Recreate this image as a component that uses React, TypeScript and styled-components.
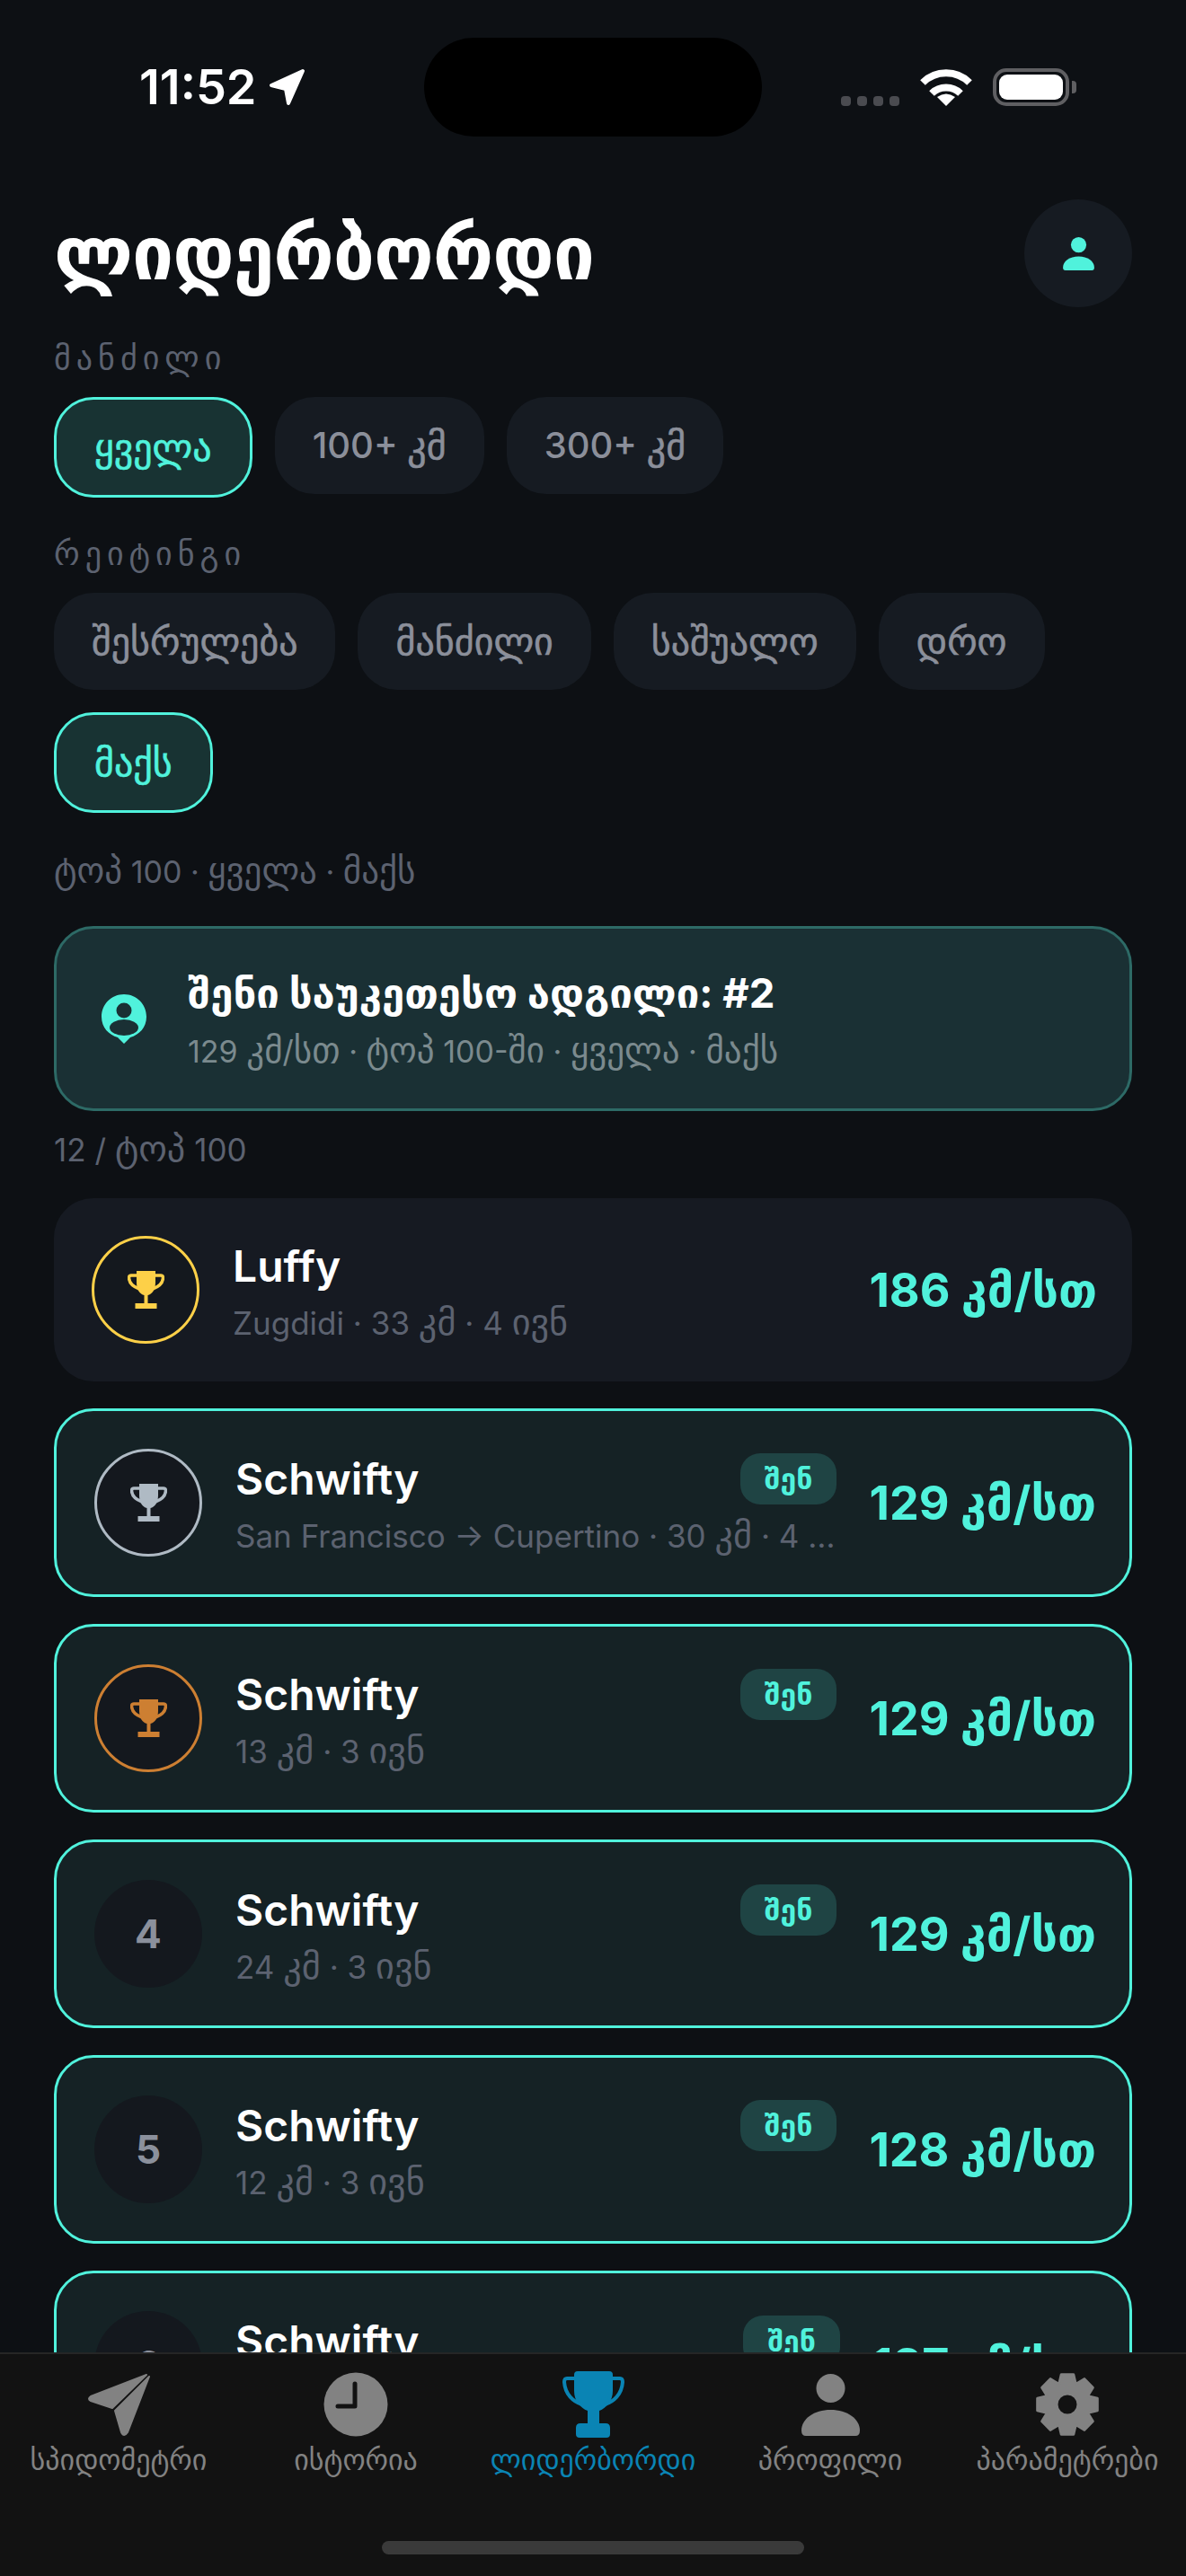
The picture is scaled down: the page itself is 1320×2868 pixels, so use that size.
import React from "react";
import styled, { createGlobalStyle } from "styled-components";

const teal = "#50f2dc";
const fontStack = `Inter, "DejaVu Sans", "Noto Sans", sans-serif`;

const GlobalStyle = createGlobalStyle`
  html, body {
    margin: 0;
    padding: 0;
    background: #0d1014;
  }
  * {
    box-sizing: border-box;
  }
`;

type RowData = {
  rank: number;
  name: string;
  sub: string;
  speed: string;
  mine: boolean;
  medal?: string;
};

const rows: RowData[] = [
  { rank: 1, name: "Luffy", sub: "Zugdidi · 33 კმ · 4 ივნ", speed: "186 კმ/სთ", mine: false, medal: "#fdd048" },
  { rank: 2, name: "Schwifty", sub: "San Francisco → Cupertino · 30 კმ · 4 ივნ", speed: "129 კმ/სთ", mine: true, medal: "#afbac4" },
  { rank: 3, name: "Schwifty", sub: "13 კმ · 3 ივნ", speed: "129 კმ/სთ", mine: true, medal: "#cd7f32" },
  { rank: 4, name: "Schwifty", sub: "24 კმ · 3 ივნ", speed: "129 კმ/სთ", mine: true },
  { rank: 5, name: "Schwifty", sub: "12 კმ · 3 ივნ", speed: "128 კმ/სთ", mine: true },
  { rank: 6, name: "Schwifty", sub: "17 კმ · 3 ივნ", speed: "127 კმ/სთ", mine: true },
];

// the Georgian fallback runs small next to Inter, so those runs get their own size
const Mixed = ({ text }: { text: string }) => (
  <>
    {text.split(/([\u10A0-\u10FF]+)/).map((part, i) =>
      i % 2 === 1 ? <Geo key={i}>{part}</Geo> : part
    )}
  </>
);

const gearPath = () => {
  const teeth = 8;
  const outer = 34;
  const root = 25.5;
  let d = "";
  for (let i = 0; i < teeth; i++) {
    const c = (i * 2 * Math.PI) / teeth - Math.PI / 2;
    const pts = [
      [root, c - 0.36],
      [outer, c - 0.2],
      [outer, c + 0.2],
      [root, c + 0.36],
    ];
    pts.forEach(([r, a], j) => {
      const x = (36 + r * Math.cos(a)).toFixed(2);
      const y = (36 + r * Math.sin(a)).toFixed(2);
      d += `${i === 0 && j === 0 ? "M" : "L"}${x} ${y} `;
    });
  }
  return d + "Z M36 24 A12 12 0 1 0 36 48 A12 12 0 1 0 36 24 Z";
};

const PlaneIcon = ({ color }: { color: string }) => (
  <svg width="71" height="72" viewBox="0 0 71 72" fill={color} stroke={color} strokeWidth="2" strokeLinejoin="round">
    <path d="M66 3 L4 27 Q0 30 4 32 L28 40 Z" />
    <path d="M69 5 L31 43 L38 67 Q41 73 45 67 Z" />
  </svg>
);

const ClockIcon = ({ color }: { color: string }) => (
  <svg width="72" height="72" viewBox="0 0 72 72">
    <circle cx="36" cy="36" r="35.5" fill={color} />
    <path d="M35 13 V38 H16" fill="none" stroke="#121212" strokeWidth="5" strokeLinecap="round" strokeLinejoin="round" />
  </svg>
);

const CupIcon = ({ color }: { color: string }) => (
  <svg width="69" height="74" viewBox="0 0 69 74" fill={color}>
    <path d="M17 0 H52 Q56 0 56 4 V22 C56 33 49 41 41 44 V58 H48 Q53 58 53 63 V70 Q53 74 49 74 H19 Q15 74 15 70 V63 Q15 58 20 58 H28 V44 C20 41 13 33 13 22 V4 Q13 0 17 0 Z" />
    <path d="M14 8 H5 Q2 8 2 12 C3 26 12 34 22 37" fill="none" stroke={color} strokeWidth="4" />
    <path d="M55 8 H64 Q67 8 67 12 C66 26 57 34 47 37" fill="none" stroke={color} strokeWidth="4" />
  </svg>
);

const PersonIcon = ({ color, width, height }: { color: string; width: number; height: number }) => (
  <svg width={width} height={height} viewBox="0 0 65 69" fill={color}>
    <circle cx="32.5" cy="16" r="16" />
    <path d="M0 63 C0 50 14 40 32.5 40 C51 40 65 50 65 63 Q65 69 60 69 H5 Q0 69 0 63 Z" />
  </svg>
);

const GearIcon = ({ color }: { color: string }) => (
  <svg width="72" height="72" viewBox="0 0 72 72">
    <path d={gearPath()} fill={color} fillRule="evenodd" stroke={color} strokeWidth="3" strokeLinejoin="round" />
  </svg>
);

const MedalCup = ({ color }: { color: string }) => (
  <svg width="41" height="42" viewBox="0 0 41 42" fill={color}>
    <path d="M10 0 H31 V13 C31 21 27 26 22.5 27 V36 H18.5 V27 C14 26 10 21 10 13 Z" />
    <rect x="8.5" y="36" width="24" height="6" />
    <path d="M11 5 H4 Q1.5 5 1.5 8 C2 14 7 18 13 20" fill="none" stroke={color} strokeWidth="3.5" />
    <path d="M30 5 H37 Q39.5 5 39.5 8 C39 14 34 18 28 20" fill="none" stroke={color} strokeWidth="3.5" />
  </svg>
);

const tabs = [
  { label: "სპიდომეტრი", icon: (c: string) => <PlaneIcon color={c} /> },
  { label: "ისტორია", icon: (c: string) => <ClockIcon color={c} /> },
  { label: "ლიდერბორდი", icon: (c: string) => <CupIcon color={c} />, active: true },
  { label: "პროფილი", icon: (c: string) => <PersonIcon color={c} width={65} height={69} /> },
  { label: "პარამეტრები", icon: (c: string) => <GearIcon color={c} /> },
];

const App = () => {
  return (
    <Screen>
      <GlobalStyle />
      <StatusBar>
        <StatusLeft>
          <Clock>11:52</Clock>
          <svg width="41" height="42" viewBox="0 0 41 42" fill="#fff" stroke="#fff" strokeWidth="4" strokeLinejoin="round">
            <path d="M38 3 L3 19 L19 23 L22 39 Z" />
          </svg>
        </StatusLeft>
        <Island />
        <StatusRight>
          <SignalDots>
            <SignalDot />
            <SignalDot />
            <SignalDot />
            <SignalDot />
          </SignalDots>
          <svg width="58" height="41" viewBox="0 0 58 41" fill="none" stroke="#fff" strokeWidth="8">
            <path d="M3 15 A37 37 0 0 1 55 15" />
            <path d="M13 27 A23 23 0 0 1 45 27" />
            <path d="M29 41 L19 31 Q29 24 39 31 Z" fill="#fff" stroke="none" />
          </svg>
          <Battery>
            <BatteryFill />
          </Battery>
        </StatusRight>
      </StatusBar>

      <Content>
        <Header>
          <Title>ლიდერბორდი</Title>
          <ProfileButton>
            <PersonIcon color={teal} width={35} height={37} />
          </ProfileButton>
        </Header>

        <SectionLabel>მანძილი</SectionLabel>
        <ChipRow>
          <Chip $active><Mixed text="ყველა" /></Chip>
          <Chip><Mixed text="100+ კმ" /></Chip>
          <Chip><Mixed text="300+ კმ" /></Chip>
        </ChipRow>

        <SectionLabel>რეიტინგი</SectionLabel>
        <ChipRow>
          <Chip><Mixed text="შესრულება" /></Chip>
          <Chip><Mixed text="მანძილი" /></Chip>
          <Chip><Mixed text="საშუალო" /></Chip>
          <Chip><Mixed text="დრო" /></Chip>
          <Chip $active><Mixed text="მაქს" /></Chip>
        </ChipRow>

        <Summary><Mixed text="ტოპ 100 · ყველა · მაქს" /></Summary>

        <BestCard>
          <svg width="50" height="55" viewBox="0 0 50 55">
            <path
              d="M25 0 C39 0 50 11 50 25 C50 37 42 45 32 48 L25 55 L18 48 C8 45 0 37 0 25 C0 11 11 0 25 0 Z"
              fill={teal}
            />
            <circle cx="25" cy="18" r="8.5" fill="#1a3034" />
            <ellipse cx="25" cy="37" rx="16" ry="9" fill="#1a3034" />
          </svg>
          <BestText>
            <BestTitle>შენი საუკეთესო ადგილი: #2</BestTitle>
            <BestSub><Mixed text="129 კმ/სთ · ტოპ 100-ში · ყველა · მაქს" /></BestSub>
          </BestText>
        </BestCard>

        <CountLabel><Mixed text="12 / ტოპ 100" /></CountLabel>

        <List>
          {rows.map((row) => (
            <Row key={row.rank} $mine={row.mine}>
              <RankBadge $color={row.medal}>
                {row.medal ? <MedalCup color={row.medal} /> : row.rank}
              </RankBadge>
              <RowText>
                <NameLine>
                  <Name>{row.name}</Name>
                  {row.mine && <YouTag>შენ</YouTag>}
                </NameLine>
                <RowSub><Mixed text={row.sub} /></RowSub>
              </RowText>
              <Speed>{row.speed}</Speed>
            </Row>
          ))}
        </List>
      </Content>

      <TabBar>
        <Tabs>
          {tabs.map((tab) => (
            <Tab key={tab.label}>
              <TabIcon>{tab.icon(tab.active ? "#0a84b4" : "#828282")}</TabIcon>
              <TabLabel $active={tab.active}>{tab.label}</TabLabel>
            </Tab>
          ))}
        </Tabs>
        <HomeIndicator />
      </TabBar>
    </Screen>
  );
};

const Screen = styled.div`
  display: flex;
  flex-direction: column;
  width: 1320px;
  height: 2868px;
  overflow: hidden;
  background: #0d1014;
  font-family: ${fontStack};
  color: #fff;
`;
const Geo = styled.span`
  font-size: 1.15em;
`;

const StatusBar = styled.div`
  flex: none;
  display: grid;
  grid-template-columns: 1fr 376px 1fr;
  align-items: center;
  height: 190px;
  padding-top: 42px;
  padding-bottom: 38px;
`;
const StatusLeft = styled.div`
  display: flex;
  align-items: center;
  gap: 13px;
  padding-left: 155px;
`;
const Clock = styled.span`
  font-size: 54px;
  font-weight: 600;
  line-height: 60px;
`;
const Island = styled.div`
  height: 110px;
  background: #000;
  border-radius: 55px;
`;
const StatusRight = styled.div`
  display: flex;
  align-items: center;
  justify-content: flex-end;
  gap: 23px;
  padding-right: 130px;
`;
const SignalDots = styled.div`
  display: flex;
  gap: 7px;
  padding-top: 31px;
`;
const SignalDot = styled.div`
  width: 11px;
  height: 11px;
  border-radius: 4px;
  background: #4a4b50;
`;
const Battery = styled.div`
  position: relative;
  width: 85px;
  height: 42px;
  padding: 3px;
  border: 4px solid #5f5f62;
  border-radius: 15px;

  &::after {
    content: "";
    position: absolute;
    right: -12px;
    top: 10px;
    width: 5px;
    height: 14px;
    background: #5f5f62;
    border-radius: 0 4px 4px 0;
  }
`;
const BatteryFill = styled.div`
  height: 100%;
  background: #fff;
  border-radius: 9px;
`;

const Content = styled.div`
  flex: 1;
  min-height: 0;
  overflow: hidden;
  padding: 32px 60px 0;
`;
const Header = styled.div`
  display: flex;
  align-items: center;
  justify-content: space-between;
  height: 120px;
  margin-bottom: 36px;
`;
const Title = styled.h1`
  margin: 0;
  font-size: 82px;
  font-weight: 700;
  line-height: 90px;
  letter-spacing: -1px;
`;
const ProfileButton = styled.div`
  display: flex;
  align-items: center;
  justify-content: center;
  width: 120px;
  height: 120px;
  border-radius: 50%;
  background: #161b22;
`;

const SectionLabel = styled.div`
  height: 40px;
  margin-bottom: 24px;
  font-size: 36px;
  line-height: 40px;
  letter-spacing: 6px;
  color: #5c6270;
`;
const ChipRow = styled.div`
  display: flex;
  flex-wrap: wrap;
  gap: 25px;
  margin-bottom: 42px;
`;
const Chip = styled.div<{ $active?: boolean }>`
  display: flex;
  align-items: center;
  height: ${(p) => (p.$active ? "112px" : "108px")};
  padding: 0 42px;
  border: ${(p) => (p.$active ? `3px solid ${teal}` : "none")};
  border-radius: 44px;
  background: ${(p) => (p.$active ? "#183333" : "#161b22")};
  color: ${(p) => (p.$active ? teal : "#8b8f9a")};
  font-size: 40px;
  font-weight: 500;
  line-height: 48px;
  white-space: pre;

  span {
    font-size: 42px;
    -webkit-text-stroke: 0.6px currentColor;
  }
`;

const Summary = styled.div`
  height: 44px;
  margin-bottom: 40px;
  font-size: 34px;
  line-height: 44px;
  color: #5c6270;
`;
const BestCard = styled.div`
  display: flex;
  align-items: center;
  gap: 46px;
  padding: 42px 50px;
  border: 3px solid #2d6a66;
  border-radius: 44px;
  background: #1a3034;
`;
const BestText = styled.div`
  display: flex;
  flex-direction: column;
  gap: 10px;
`;
const BestTitle = styled.div`
  font-size: 45.5px;
  font-weight: 700;
  line-height: 60px;
`;
const BestSub = styled.div`
  height: 46px;
  font-size: 34px;
  line-height: 46px;
  color: #7b8a8e;
`;
const CountLabel = styled.div`
  height: 44px;
  margin: 20px 0 33px;
  font-size: 35px;
  line-height: 44px;
  color: #5c6270;
`;

const List = styled.div`
  display: flex;
  flex-direction: column;
  gap: 30px;
`;
const Row = styled.div<{ $mine: boolean }>`
  display: flex;
  align-items: center;
  padding: ${(p) => (p.$mine ? "42px 37px 42px 42px" : "42px 39px 42px 42px")};
  border: ${(p) => (p.$mine ? `3px solid ${teal}` : "none")};
  border-radius: 44px;
  background: ${(p) => (p.$mine ? "#152225" : "#161a22")};
`;
const RankBadge = styled.div<{ $color?: string }>`
  flex: none;
  display: flex;
  align-items: center;
  justify-content: center;
  width: 120px;
  height: 120px;
  border: ${(p) => (p.$color ? `3.5px solid ${p.$color}` : "none")};
  border-radius: 50%;
  background: #14181e;
  color: #8b909c;
  font-size: 44px;
  font-weight: 700;
`;
const RowText = styled.div`
  flex: 1;
  min-width: 0;
  margin: 0 36px 0 37px;
`;
const NameLine = styled.div`
  display: flex;
  align-items: center;
  justify-content: space-between;
  height: 60px;
`;
const Name = styled.div`
  font-size: 48px;
  font-weight: 600;
  line-height: 60px;
`;
const YouTag = styled.div`
  padding: 6px 27px;
  border-radius: 22px;
  background: #1f4444;
  color: ${teal};
  font-size: 32px;
  font-weight: 600;
  line-height: 45px;
`;
const RowSub = styled.div`
  height: 56px;
  margin: 4px 0 -7px;
  overflow: hidden;
  font-size: 35px;
  line-height: 56px;
  color: #5c6270;
  white-space: nowrap;
  text-overflow: ellipsis;
`;
const Speed = styled.div`
  flex: none;
  color: ${teal};
  font-size: 52px;
  font-weight: 700;
`;

const TabBar = styled.div`
  flex: none;
  height: 249px;
  padding-top: 19px;
  border-top: 2px solid #262626;
  background: #121212;
`;
const Tabs = styled.div`
  display: flex;
  height: 189px;
`;
const Tab = styled.div`
  flex: 1;
  display: flex;
  flex-direction: column;
  align-items: center;
`;
const TabIcon = styled.div`
  display: flex;
  align-items: center;
  justify-content: center;
  height: 74px;
`;
const TabLabel = styled.div<{ $active?: boolean }>`
  margin-top: 3px;
  font-size: 32px;
  line-height: 44px;
  color: ${(p) => (p.$active ? "#0a84b4" : "#828282")};
  white-space: nowrap;
`;
const HomeIndicator = styled.div`
  width: 470px;
  height: 15px;
  margin: 0 auto;
  border-radius: 8px;
  background: #3a3a3a;
`;

export default App;
